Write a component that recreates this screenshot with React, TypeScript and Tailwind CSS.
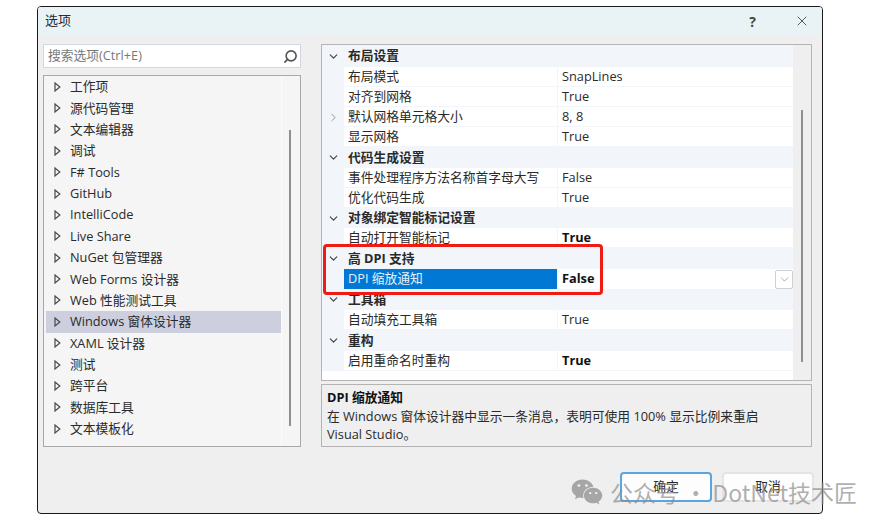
import { ChevronDown, ChevronRight, Search, X } from "lucide-react";
import { FaWeixin } from "react-icons/fa";

const treeItems = [
  "工作项",
  "源代码管理",
  "文本编辑器",
  "调试",
  "F# Tools",
  "GitHub",
  "IntelliCode",
  "Live Share",
  "NuGet 包管理器",
  "Web Forms 设计器",
  "Web 性能测试工具",
  "Windows 窗体设计器",
  "XAML 设计器",
  "测试",
  "跨平台",
  "数据库工具",
  "文本模板化",
];

type Row =
  | { kind: "header"; label: string; h: string }
  | { kind: "prop"; label: string; value: string; bold?: boolean; expand?: boolean; selected?: boolean };

const rows: Row[] = [
  { kind: "header", label: "布局设置", h: "h-[22px]" },
  { kind: "prop", label: "布局模式", value: "SnapLines" },
  { kind: "prop", label: "对齐到网格", value: "True" },
  { kind: "prop", label: "默认网格单元格大小", value: "8, 8", expand: true },
  { kind: "prop", label: "显示网格", value: "True" },
  { kind: "header", label: "代码生成设置", h: "h-[21px]" },
  { kind: "prop", label: "事件处理程序方法名称首字母大写", value: "False" },
  { kind: "prop", label: "优化代码生成", value: "True" },
  { kind: "header", label: "对象绑定智能标记设置", h: "h-[20px]" },
  { kind: "prop", label: "自动打开智能标记", value: "True", bold: true },
  { kind: "header", label: "高 DPI 支持", h: "h-[21px]" },
  { kind: "prop", label: "DPI 缩放通知", value: "False", bold: true, selected: true },
  { kind: "header", label: "工具箱", h: "h-[21px]" },
  { kind: "prop", label: "自动填充工具箱", value: "True" },
  { kind: "header", label: "重构", h: "h-[21px]" },
  { kind: "prop", label: "启用重命名时重构", value: "True", bold: true },
];

function TreeArrow() {
  return (
    <svg width="7" height="10" viewBox="0 0 7 10" className="shrink-0">
      <path d="M1 1 L5.8 5 L1 9 Z" fill="none" stroke="#4a4a4a" strokeWidth="1.2" />
    </svg>
  );
}

export default function App() {
  return (
    <div className="relative w-[896px] h-[528px] bg-white pt-[6px] pl-[37px] overflow-hidden text-[12.75px] text-[#2a2a2a] font-['Open_Sans','Noto_Sans_CJK_SC',sans-serif]">
      <div className="w-[786px] h-[508px] bg-[#efefef] border-[1.5px] border-[#1a1a1a] rounded-[4px] overflow-hidden">
        {/* Title bar */}
        <div className="h-[28px] bg-[#e9f3f6] flex items-center pl-[7px]">
          <span className="text-[13px] grow">选项</span>
          <span className="font-bold text-[14px] text-[#444] mr-[38px]">?</span>
          <X size={16} strokeWidth={1.2} className="mr-[12px] text-[#333]" />
        </div>

        <div className="flex pl-[5px] pt-[9px]">
          {/* Left column */}
          <div className="w-[258px] mr-[20px]">
            <div className="h-[24px] bg-white border-[1.5px] border-[#d4d6e2] flex items-center pl-[4px] pr-[2px]">
              <span className="grow text-[#777]">搜索选项(Ctrl+E)</span>
              <Search size={15} strokeWidth={2.6} className="-scale-x-100 text-[#555]" />
            </div>
            <div className="mt-[7px] h-[372px] bg-[#f5f5f5] border-[1.5px] border-[#a8a8a8] flex">
              <div className="w-[237px] pl-[2px]">
                {treeItems.map((item) => (
                  <div
                    key={item}
                    className={`h-[21.375px] flex items-center pl-[8px] gap-[9px] ${
                      item === "Windows 窗体设计器" ? "bg-[#cdcfde]" : ""
                    }`}
                  >
                    <TreeArrow />
                    <span>{item}</span>
                  </div>
                ))}
              </div>
              <div className="w-px bg-[#fbfbfb]" />
              <div className="grow flex justify-center pt-[54px]">
                <div className="w-[2px] h-[296px] bg-[#8f8f8f] ml-[-2px]" />
              </div>
            </div>
          </div>

          {/* Right column */}
          <div className="w-[491px]">
            <div className="h-[337px] bg-white border-[1.5px] border-[#b4b4b4] flex">
              <div className="w-[471px]">
                {rows.map((row) =>
                  row.kind === "header" ? (
                    <div key={row.label} className={`${row.h} bg-[#f2f6fb] flex items-center`}>
                      <div className="w-[22px] flex justify-center">
                        <ChevronDown size={13} strokeWidth={2.2} className="text-[#444]" />
                      </div>
                      <span className="font-bold pl-[4px]">{row.label}</span>
                    </div>
                  ) : (
                    <div key={row.label} className="h-[20px] flex">
                      <div className="w-[22px] bg-[#f2f6fb] flex items-center justify-center">
                        {row.expand && <ChevronRight size={13} strokeWidth={1.6} className="text-[#888]" />}
                      </div>
                      <div
                        className={`w-[213px] flex items-center pl-[4px] ${
                          row.selected ? "bg-[#0078d4] text-[#e6f1fb]" : "border-b border-[#f2f6fb]"
                        }`}
                      >
                        {row.label}
                      </div>
                      <div
                        className={`grow flex items-center justify-between pl-[4px] border-l border-[#f2f6fb] ${
                          row.selected ? "" : "border-b"
                        } ${row.bold ? "font-bold text-[#111]" : ""}`}
                      >
                        {row.value}
                        {row.selected && (
                          <span className="w-[18px] h-[19px] bg-white border border-[#d0d0d0] rounded-[2px] flex items-center justify-center">
                            <ChevronDown size={13} strokeWidth={1.5} className="text-[#999]" />
                          </span>
                        )}
                      </div>
                    </div>
                  )
                )}
              </div>
              <div className="grow bg-[#efefef] flex justify-center pt-[65px]">
                <div className="w-[2px] h-[252px] bg-[#8f8f8f]" />
              </div>
            </div>
            <div className="mt-[3px] h-[63px] border-[1.5px] border-[#b4b4b4] pl-[5px] pt-[3px] leading-[18.5px]">
              <div className="font-bold text-[#111]">DPI 缩放通知</div>
              <div>在 Windows 窗体设计器中显示一条消息，表明可使用 100% 显示比例来重启</div>
              <div>Visual Studio。</div>
            </div>
          </div>
        </div>

        {/* Buttons */}
        <div className="flex justify-end gap-[10px] pr-[8px] mt-[25px]">
          <button className="w-[92px] h-[30px] bg-[#fdfdfd] border-2 border-[#5aa5e0] rounded-[4px]">确定</button>
          <button className="w-[92px] h-[30px] bg-[#fdfdfd] border-2 border-[#e4e4e4] rounded-[4px]">取消</button>
        </div>
      </div>

      {/* Red highlight */}
      <div className="absolute left-[323px] top-[244px] w-[280px] h-[51px] border-[3px] border-[#f01c14] rounded-[4px]" />

      {/* Watermark */}
      <div className="absolute left-[571px] top-[476px] h-[32px] flex items-center text-[#8c8c8c]/70 text-[23px] font-['Noto_Sans_CJK_SC',sans-serif] whitespace-nowrap">
        <FaWeixin size={32} className="mr-[7px] text-[#a6a6a6]" />
        <span>公众号 · DotNet技术匠</span>
      </div>
    </div>
  );
}
